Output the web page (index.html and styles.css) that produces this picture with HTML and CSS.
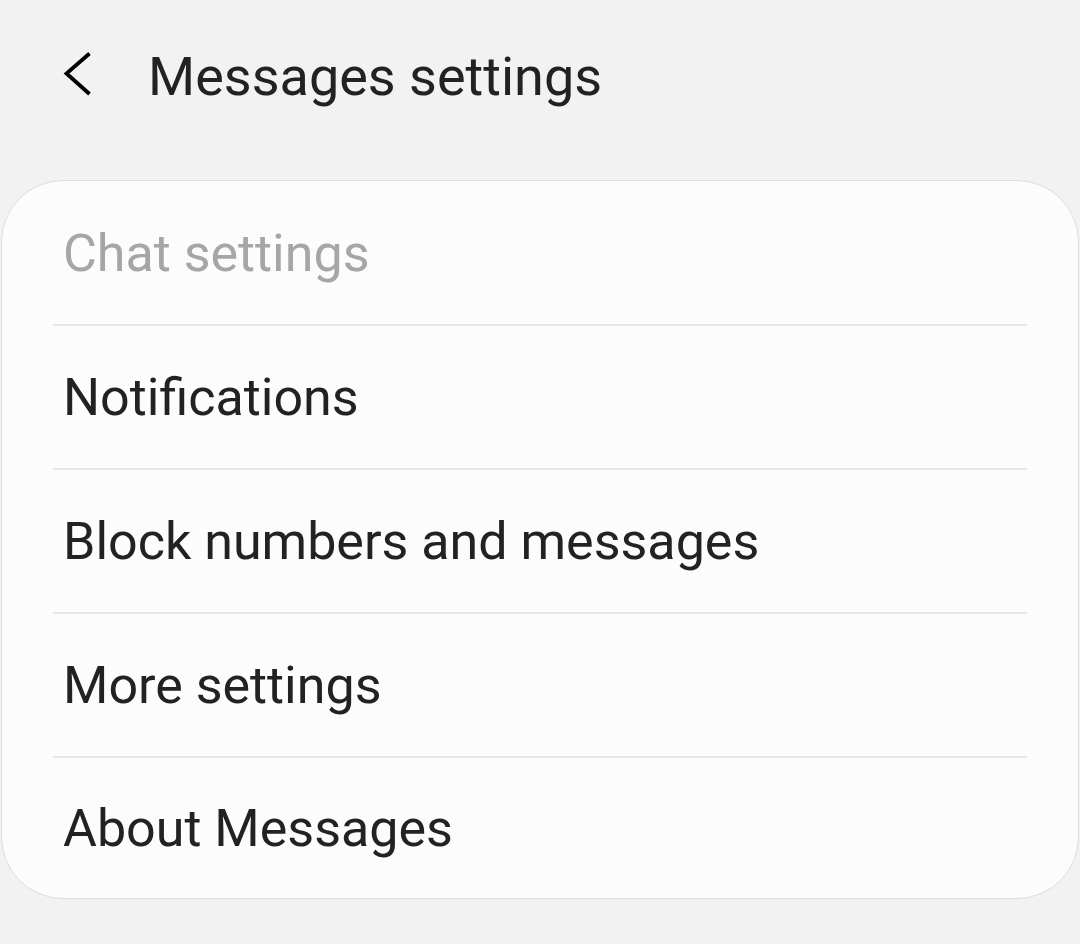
FILE: index.html
```html
<!DOCTYPE html>
<html>
<head>
<meta charset="utf-8">
<link rel="stylesheet" href="styles.css">
</head>
<body>
<header class="appbar">
  <button class="back" aria-label="Back">
    <svg width="30" height="46" viewBox="0 0 30 46"><path d="M26.5 1.5 L3.5 21.5 L26.5 42" fill="none" stroke="#000" stroke-width="3.8" stroke-linecap="butt"/></svg>
  </button>
  <h1 class="title">Messages settings</h1>
</header>
<section class="card">
  <div class="row subheader">Chat settings</div>
  <div class="row">Notifications</div>
  <div class="row">Block numbers and messages</div>
  <div class="row">More settings</div>
  <div class="row last">About Messages</div>
</section>
</body>
</html>
```
FILE: styles.css
```css
html, body {
  margin: 0;
  background: #f2f2f2;
  font-family: Roboto, "Noto Sans", sans-serif;
}
.appbar {
  height: 180px;
  display: flex;
  align-items: flex-start;
}
.back {
  margin: 52px 0 0 63px;
  padding: 0;
  border: 0;
  background: none;
  width: 30px;
  height: 46px;
  display: block;
}
.back svg { display: block; }
.title {
  margin: 40px 0 0 55px;
  font-size: 54px;
  font-weight: 400;
  color: #222;
  line-height: 74px;
  letter-spacing: 0;
}
.card {
  margin: 0 1px;
  background: #fcfcfc;
  border: 1px solid #dcdcdc;
  border-radius: 62px;
  padding: 2px 51px 0;
}
.row {
  height: 142px;
  display: flex;
  align-items: center;
  padding-left: 10px;
  border-bottom: 2px solid #e6e6e6;
  font-size: 52px;
  color: #222;
}
.row.subheader { color: #a6a6a6; height: 141px; }
.row.last { border-bottom: 0; height: 140px; }
```
